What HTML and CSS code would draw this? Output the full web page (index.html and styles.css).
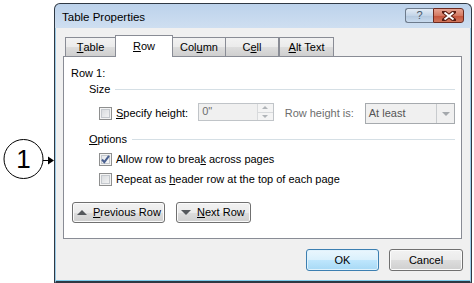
FILE: index.html
```html
<!DOCTYPE html>
<html lang="en">
<head>
<meta charset="UTF-8">
<title>Table Properties</title>
<link rel="stylesheet" href="styles.css">
</head>
<body>

<div class="callout">
    <svg width="54" height="44" viewBox="0 0 54 44">
        <circle cx="23.5" cy="22" r="19.5" fill="#fff" stroke="#000" stroke-width="1"/>
        <text x="23.5" y="31" text-anchor="middle" font-family="Liberation Sans, Arial, sans-serif" font-size="26">1</text>
        <line x1="43" y1="23.5" x2="49" y2="23.5" stroke="#000" stroke-width="1"/>
        <polygon points="48,19.5 54,23.5 48,27.5" fill="#000"/>
    </svg>
</div>

<div class="dialog">
    <div class="titlebar">
        <span class="title">Table Properties</span>
        <div class="caption-buttons">
            <span class="cap-btn help">?</span>
            <span class="cap-btn close">
                <svg width="14" height="10" viewBox="0 0 14 10">
                    <path d="M2 1 L12 9 M12 1 L2 9" stroke="#5a1d12" stroke-width="4" stroke-linecap="square"/>
                    <path d="M2.5 1.5 L11.5 8.5 M11.5 1.5 L2.5 8.5" stroke="#fff" stroke-width="2"/>
                </svg>
            </span>
        </div>
    </div>

    <div class="client">
        <div class="tabs">
            <span class="tab t-table"><u>T</u>able</span>
            <span class="tab t-row active"><u>R</u>ow</span>
            <span class="tab t-column">Col<u>u</u>mn</span>
            <span class="tab t-cell">C<u>e</u>ll</span>
            <span class="tab t-alt"><u>A</u>lt Text</span>
        </div>

        <div class="panel">
            <div class="row-name">Row 1:</div>

            <div class="group-title">Size</div>
            <div class="size-row">
                <span class="check"></span>
                <span class="label"><u>S</u>pecify height:</span>
                <span class="spin">
                    <span class="spin-text">0"</span>
                    <span class="spin-btns">
                        <span class="spin-btn"><i class="tri up"></i></span>
                        <span class="spin-btn"><i class="tri down"></i></span>
                    </span>
                </span>
                <span class="label disabled">Row height is:</span>
                <span class="combo">
                    <span class="combo-text">At least</span>
                    <span class="combo-btn"><i class="tri down light"></i></span>
                </span>
            </div>

            <div class="group-title options-title"><span><u>O</u>ptions</span></div>
            <div class="opt-row">
                <span class="check checked">
                    <svg width="11" height="11" viewBox="0 0 11 11">
                        <path d="M2 5.5 L4.3 8.2 L9 1.8" fill="none" stroke="#4a6090" stroke-width="2"/>
                    </svg>
                </span>
                <span class="label">Allow row to brea<u>k</u> across pages</span>
            </div>
            <div class="opt-row">
                <span class="check"></span>
                <span class="label">Repeat as <u>h</u>eader row at the top of each page</span>
            </div>

            <div class="nav-buttons">
                <span class="btn prev"><i class="tri up dark"></i><span><u>P</u>revious Row</span></span>
                <span class="btn next"><i class="tri down dark"></i><span><u>N</u>ext Row</span></span>
            </div>
        </div>

        <div class="footer">
            <span class="btn default ok">OK</span>
            <span class="btn cancel">Cancel</span>
        </div>
    </div>
</div>

</body>
</html>
```

FILE: styles.css
```css
body {
    margin: 0;
    padding: 0;
    background-color: #fff;
    font-family: "Liberation Sans", Arial, sans-serif;
    font-size: 11px;
    color: #000;
    display: flex;
    align-items: flex-start;
}
u {
    text-decoration: underline;
    text-underline-offset: 1px;
}
.callout {
    width: 54px;
    margin-top: 137px;
}
.callout svg {
    display: block;
}
.dialog {
    margin-top: 3px;
    width: 418px;
    height: 280px;
    box-sizing: border-box;
    border: 1px solid #2f3944;
    border-bottom: none;
    border-radius: 6px 6px 0 0;
    background: linear-gradient(#bcd2eb, #d3e2f2 30px);
    display: flex;
    flex-direction: column;
    overflow: hidden;
}
.titlebar {
    height: 24px;
    display: flex;
    justify-content: space-between;
    padding-left: 7px;
    padding-right: 7px;
}
.title {
    font-size: 11.5px;
    line-height: 15px;
    padding-top: 6px;
}
.caption-buttons {
    display: flex;
    padding-top: 4px;
}
.cap-btn {
    height: 15px;
    box-sizing: border-box;
    border: 1px solid #6d7b8c;
    display: flex;
    align-items: center;
    justify-content: center;
}
.help {
    width: 28px;
    border-radius: 3px 0 0 3px;
    border-right: none;
    background: linear-gradient(#e3ecf6, #c4d5e8 50%, #b4c8de 51%, #c9dbee);
    color: #4a5868;
    font-size: 11px;
    line-height: 13px;
}
.close {
    width: 31px;
    border-color: #6b2a20;
    border-radius: 0 3px 3px 0;
    background: linear-gradient(#e8a493, #d47a63 50%, #c4513a 51%, #d0775c);
}
.close svg {
    display: block;
}
.client {
    flex: 1;
    background-color: #f0f0f0;
    border: 1px solid #9ccbe6;
    border-top: none;
    border-bottom: 2px solid #2f3944;
    box-shadow: inset 0 -1px 0 #7ccbea;
    padding: 7px 8px 0 7px;
    display: flex;
    flex-direction: column;
}
.tabs {
    height: 21px;
    display: flex;
    align-items: flex-end;
    padding-left: 2px;
    position: relative;
    z-index: 1;
}
.tab {
    height: 19px;
    box-sizing: border-box;
    border: 1px solid #898c95;
    border-bottom: none;
    background: linear-gradient(#f2f2f2, #ebebeb 50%, #dddddd 51%, #cfcfcf);
    display: flex;
    align-items: center;
    justify-content: center;
    line-height: 15px;
    margin-left: -1px;
    padding-top: 1px;
}
.tab.active {
    height: 22px;
    margin-bottom: -1px;
    background: #fff;
    padding-bottom: 2px;
}
.t-table { width: 51px; margin-left: 0; }
.t-row { width: 58px; }
.t-column { width: 54px; }
.t-cell { width: 54px; }
.t-alt { width: 55px; margin-left: 0; }
.panel {
    height: 183px;
    box-sizing: border-box;
    border: 1px solid #898c95;
    background-color: #fff;
    padding: 9px 6px 0 7px;
    display: flex;
    flex-direction: column;
}
.row-name {
    line-height: 15px;
}
.group-title {
    display: flex;
    align-items: center;
    line-height: 15px;
    margin-left: 18px;
    margin-top: 1px;
}
.group-title::after {
    content: "";
    flex: 1;
    height: 1px;
    background-color: #d5dfe5;
    margin-left: 5px;
}
.options-title {
    margin-top: 8px;
}
.size-row {
    display: flex;
    align-items: center;
    margin-left: 28px;
    margin-top: 6px;
    height: 21px;
}
.check {
    width: 13px;
    height: 13px;
    box-sizing: border-box;
    border: 1px solid #8e8f8f;
    background: linear-gradient(135deg, #d3d6da, #f8f8f8);
    box-shadow: inset 0 0 0 1px #f4f4f4, inset 0 0 0 2px #c4c8cd;
    flex: none;
    display: flex;
    align-items: center;
    justify-content: center;
}
.check.checked {
    background: linear-gradient(135deg, #e2e4e7, #fbfbfb);
}
.check svg {
    display: block;
}
.label {
    margin-left: 4px;
    line-height: 15px;
    white-space: nowrap;
}
.label.disabled {
    color: #6d6d6d;
    margin-left: 11px;
}
.spin {
    margin-left: 10px;
    width: 77px;
    height: 18px;
    box-sizing: border-box;
    border: 1px solid #c0c4c8;
    background-color: #f0f0f0;
    display: flex;
    margin-top: -3px;
}
.spin-text {
    flex: 1;
    color: #6d6d6d;
    padding-left: 3px;
    line-height: 15px;
}
.spin-btns {
    width: 15px;
    display: flex;
    flex-direction: column;
    border-left: 1px solid #d8dadc;
}
.spin-btn {
    flex: 1;
    display: flex;
    align-items: center;
    justify-content: center;
    border-bottom: 1px solid #d8dadc;
    background-color: #f4f4f4;
}
.spin-btn:last-child {
    border-bottom: none;
}
.tri {
    display: block;
    width: 0;
    height: 0;
    border-left: 3px solid transparent;
    border-right: 3px solid transparent;
}
.tri.up {
    border-bottom: 3px solid #b0b4b8;
}
.tri.down {
    border-top: 3px solid #b0b4b8;
}
.tri.light {
    border-left-width: 4px;
    border-right-width: 4px;
    border-top-width: 4px;
    border-top-color: #a4a8ac;
}
.tri.dark {
    border-left-width: 5px;
    border-right-width: 5px;
}
.tri.dark.up {
    border-bottom: 5px solid #55585c;
}
.tri.dark.down {
    border-top: 5px solid #55585c;
}
.combo {
    margin-left: 11px;
    width: 92px;
    height: 21px;
    box-sizing: border-box;
    border: 1px solid #a6aaae;
    background-color: #f0f0f0;
    display: flex;
}
.combo-text {
    flex: 1;
    color: #555;
    padding-left: 3px;
    line-height: 18px;
}
.combo-btn {
    width: 17px;
    border-left: 1px solid #c8cbce;
    display: flex;
    align-items: center;
    justify-content: center;
}
.opt-row {
    display: flex;
    align-items: center;
    margin-left: 28px;
    height: 20px;
}
.options-title + .opt-row {
    margin-top: 2px;
}
.nav-buttons {
    display: flex;
    gap: 11px;
    margin-top: 13px;
    margin-left: 1px;
}
.btn {
    height: 21px;
    box-sizing: border-box;
    border: 1px solid #707070;
    border-radius: 3px;
    background: linear-gradient(#f2f2f2, #ebebeb 50%, #dddddd 51%, #cfcfcf);
    box-shadow: inset 0 0 0 1px #fbfbfb;
    display: flex;
    align-items: center;
    justify-content: center;
    line-height: 15px;
}
.btn.prev,
.btn.next {
    justify-content: flex-start;
    padding-left: 4px;
    gap: 6px;
}
.btn.prev { width: 93px; }
.btn.next { width: 75px; }
.footer {
    display: flex;
    justify-content: flex-end;
    gap: 10px;
    margin-top: 10px;
    margin-right: -1px;
}
.footer .btn {
    height: 22px;
}
.ok {
    width: 73px;
    border-color: #3c7fb1;
    background: linear-gradient(#eaf6fd, #d9f0fc 50%, #bee6fd 51%, #a7d9f5);
    box-shadow: inset 0 0 0 1px #e0f2fc;
}
.cancel {
    width: 74px;
}
```
